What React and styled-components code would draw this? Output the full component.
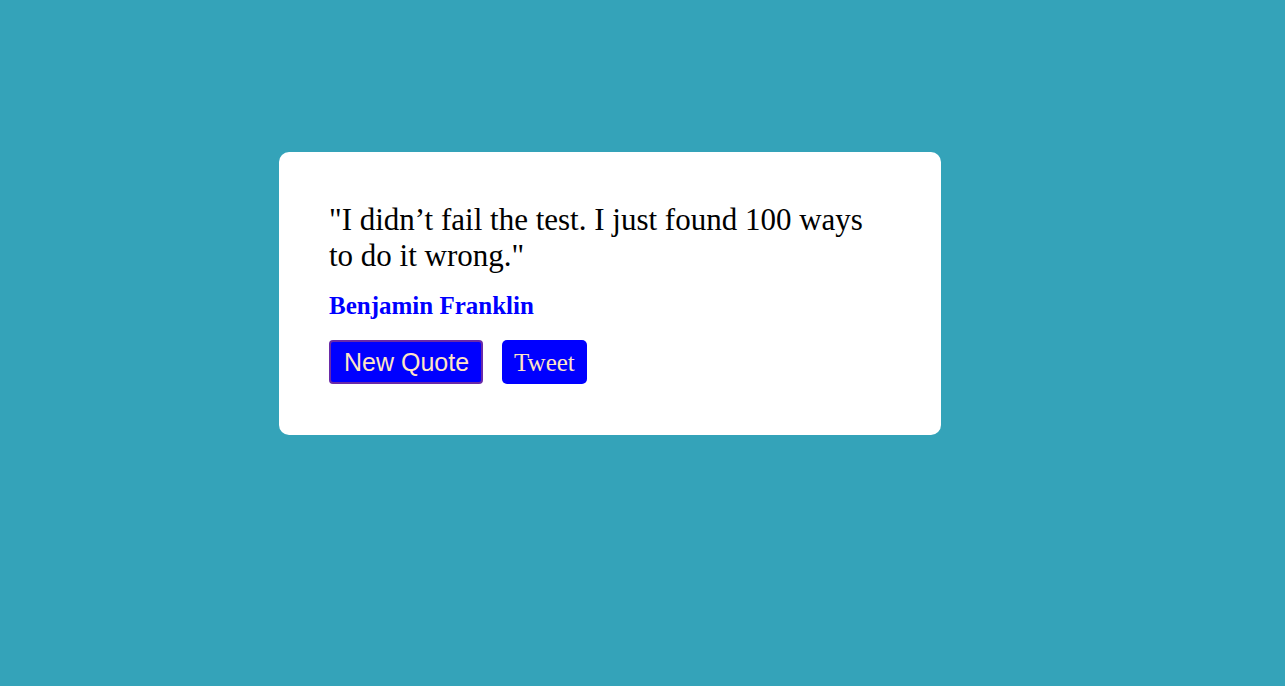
import React from 'react';
import styled, { createGlobalStyle } from 'styled-components';

const GlobalStyle = createGlobalStyle`
  html, body {
    margin: 0;
    padding: 0;
  }

  body {
    background: #34a3b9;
    font-family: "Liberation Serif", "Times New Roman", serif;
    min-height: 100vh;
  }
`;

const Page = styled.div`
  padding: 152px 0 0 279px;
`;

const Card = styled.div`
  width: 562px;
  padding: 50px 50px 51px;
  background: #ffffff;
  border-radius: 10px;
`;

const Quote = styled.p`
  margin: 0;
  font-size: 31px;
  line-height: 36px;
  color: #000000;
`;

const Author = styled.p`
  margin: 16px 0 0;
  font-size: 25px;
  font-weight: bold;
  line-height: 32px;
  color: #0000ff;
`;

const Actions = styled.div`
  display: flex;
  align-items: center;
  gap: 19px;
  margin-top: 18px;
`;

const QuoteButton = styled.button`
  height: 44px;
  padding: 0 12px 0 13px;
  border: 2px solid #6a2aa8;
  border-radius: 4px;
  background: #0000ff;
  color: #ffe4c4;
  font-family: "Liberation Sans", Arial, sans-serif;
  font-size: 25px;
  cursor: pointer;
`;

const TweetLink = styled.a`
  display: flex;
  align-items: center;
  height: 44px;
  padding: 2px 12px 0;
  box-sizing: border-box;
  border-radius: 5px;
  background: #0000ff;
  color: #ffe4c4;
  font-size: 25px;
  text-decoration: none;
`;

export default function App() {
  return (
    <>
      <GlobalStyle />
      <Page>
        <Card>
          <Quote>"I didn’t fail the test. I just found 100 ways to do it wrong."</Quote>
          <Author>Benjamin Franklin</Author>
          <Actions>
            <QuoteButton>New Quote</QuoteButton>
            <TweetLink href="#">Tweet</TweetLink>
          </Actions>
        </Card>
      </Page>
    </>
  );
}
